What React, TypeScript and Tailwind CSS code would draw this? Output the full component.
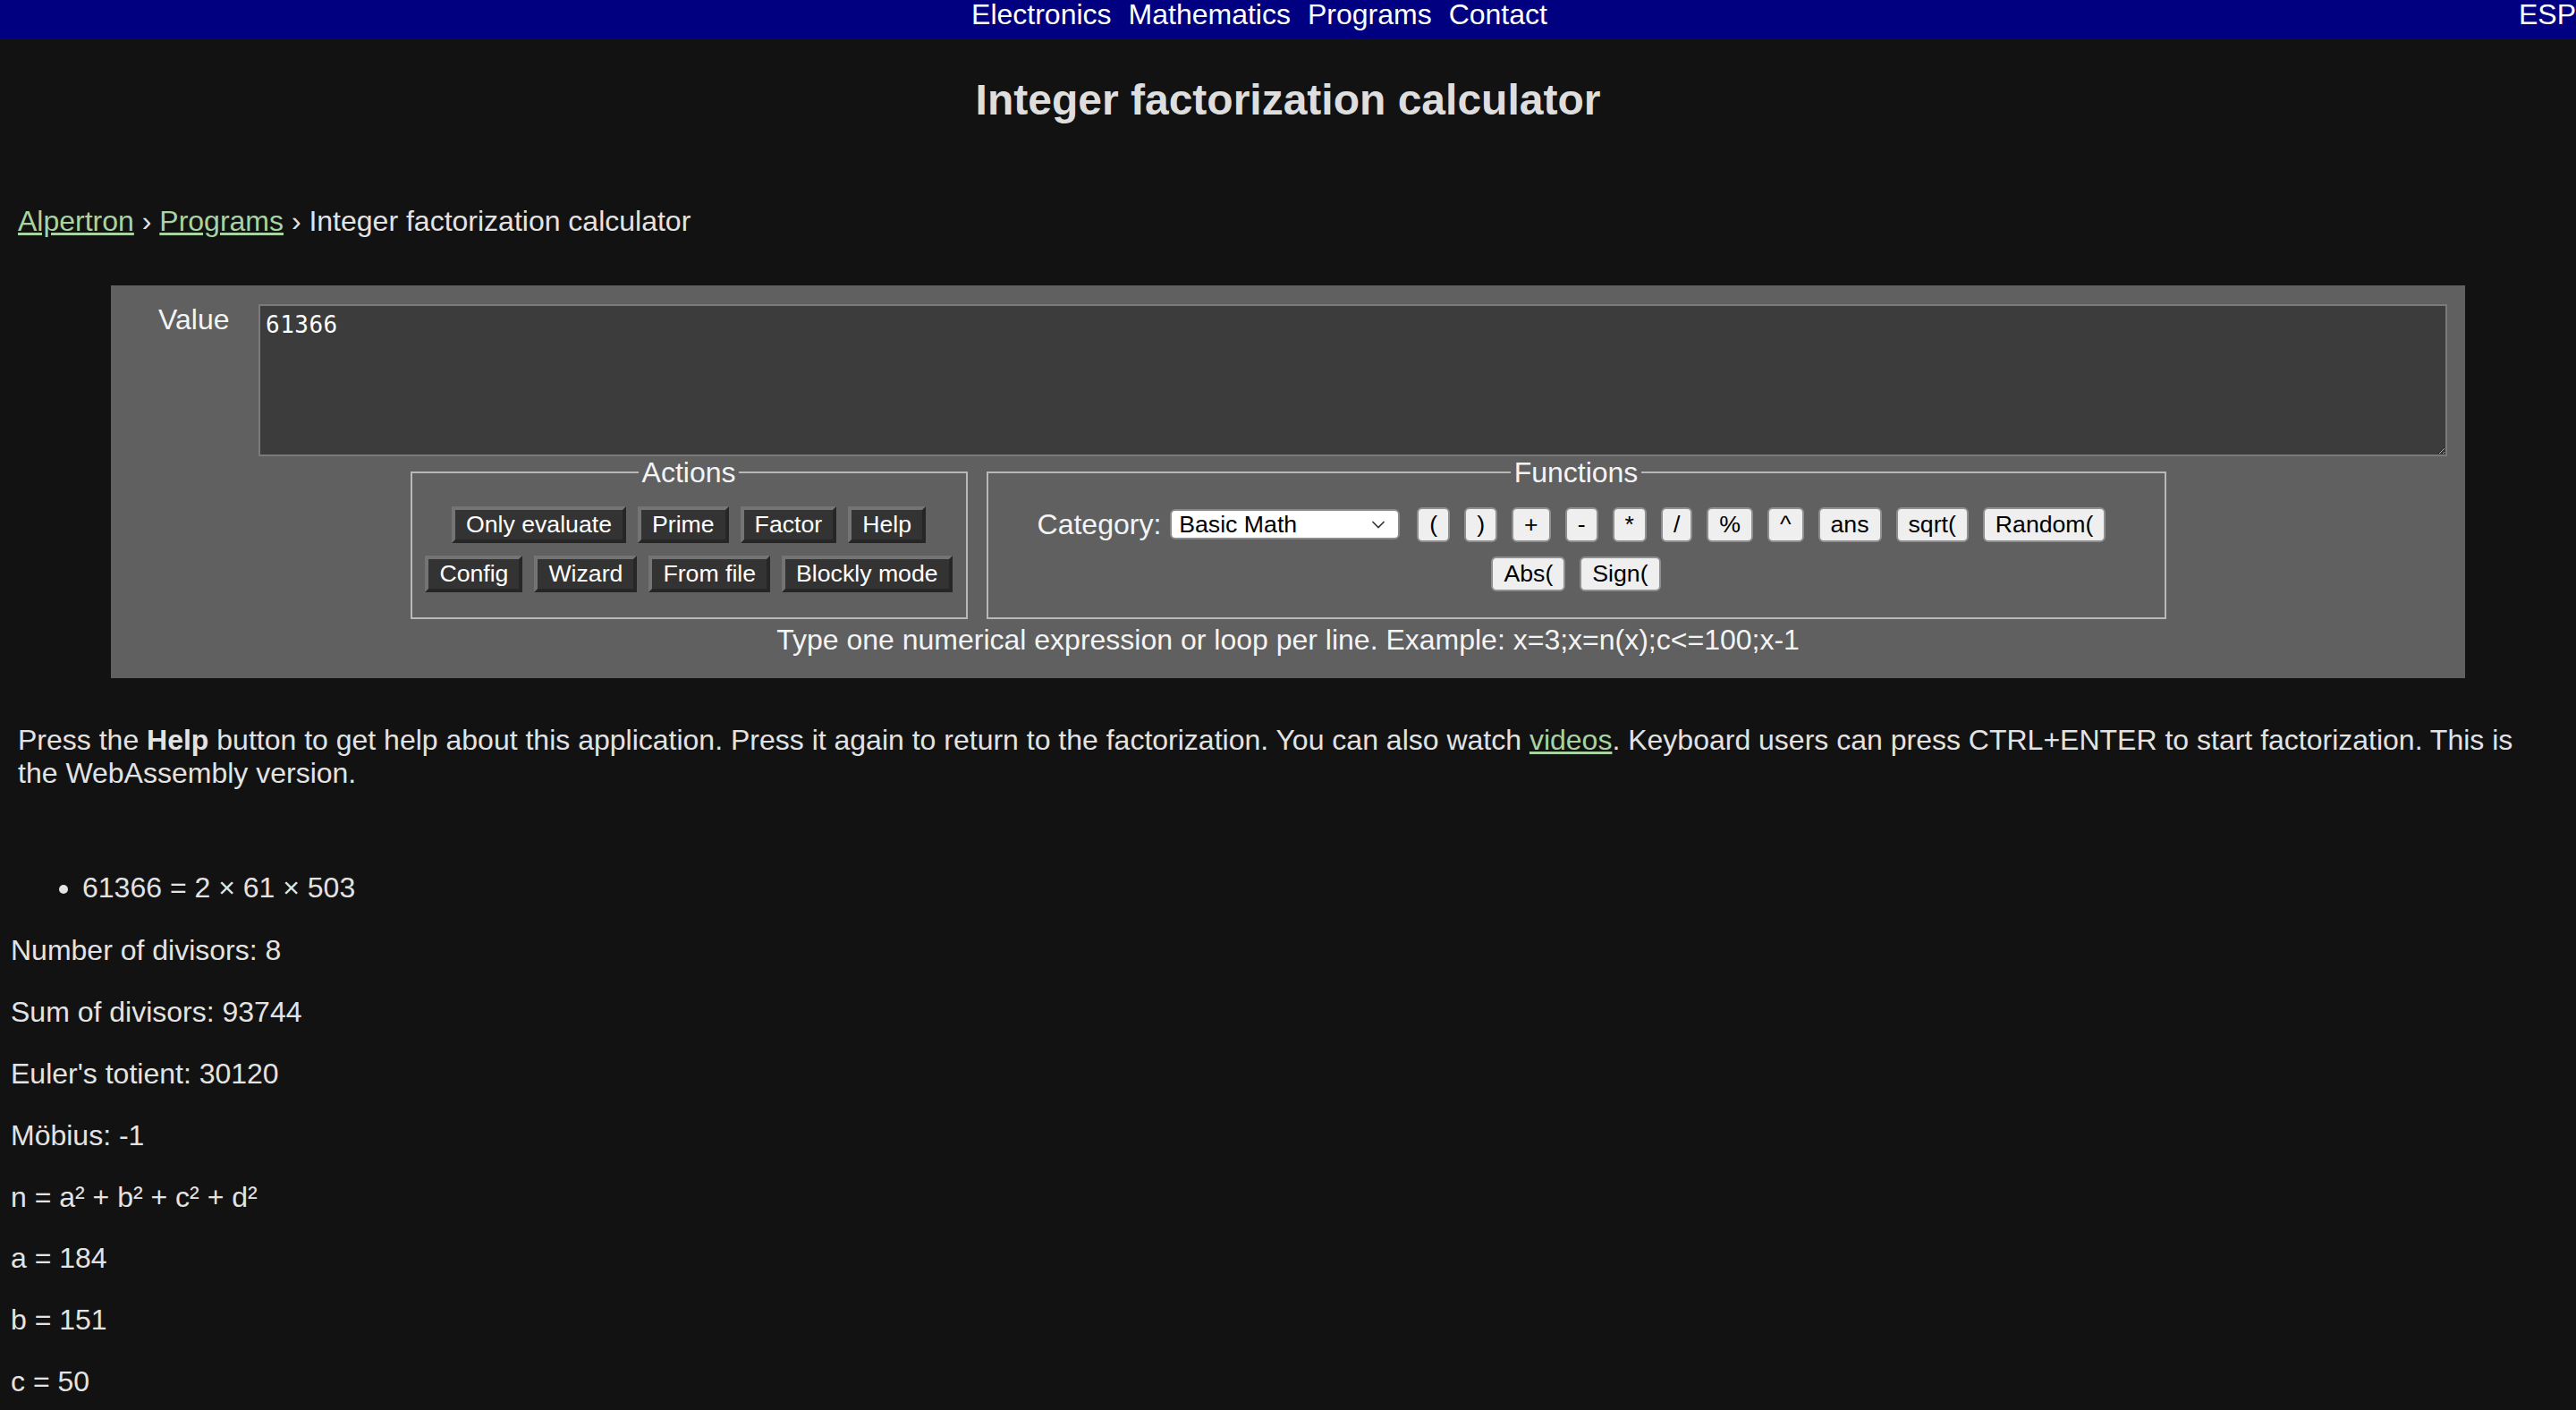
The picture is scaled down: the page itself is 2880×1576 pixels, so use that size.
import { useState } from 'react'

const actionRows = [
  ['Only evaluate', 'Prime', 'Factor', 'Help'],
  ['Config', 'Wizard', 'From file', 'Blockly mode'],
]

const basicMath = ['(', ')', '+', '-', '*', '/', '%', '^', 'ans', 'sqrt(', 'Random(']
const basicMath2 = ['Abs(', 'Sign(']

const results = [
  'Number of divisors: 8',
  'Sum of divisors: 93744',
  "Euler's totient: 30120",
  'Möbius: -1',
  'n = a² + b² + c² + d²',
  'a = 184',
  'b = 151',
  'c = 50',
  'd = 47',
]

function DarkButton({ label }: { label: string }) {
  return (
    <button className="h-[41px] px-[12px] py-[2px] text-[26.67px] leading-[29px] text-white bg-[#333333] border-4 border-t-[#747474] border-l-[#747474] border-r-[#262626] border-b-[#262626]">
      {label}
    </button>
  )
}

function LightButton({ label }: { label: string }) {
  return (
    <button className="h-[39px] px-[12px] text-[26.67px] leading-[31px] text-black bg-[#efefef] border-2 border-[#8f8f8f] rounded-[6px]">
      {label}
    </button>
  )
}

export default function App() {
  const [value, setValue] = useState('61366')

  return (
    <div className="min-h-screen bg-[#121212] text-[#e3e3e3] font-['Liberation_Sans',Arial,sans-serif] text-[32px] leading-[1.15]">
      {/* Top navigation */}
      <nav className="flex h-[43px] bg-[#000080] text-white leading-[32px]">
        <div className="flex flex-1 justify-center gap-[19px]">
          <a href="#">Electronics</a>
          <a href="#">Mathematics</a>
          <a href="#">Programs</a>
          <a href="#">Contact</a>
        </div>
        <a href="#">ESP</a>
      </nav>

      <h1 className="mt-[41px] text-center text-[48px] font-bold leading-[1.15] text-[#dedede]">
        Integer factorization calculator
      </h1>

      {/* Breadcrumb */}
      <div className="mt-[90px] pl-[20px]">
        <a href="#" className="text-[#a9d3a0] underline">Alpertron</a>
        {' › '}
        <a href="#" className="text-[#a9d3a0] underline">Programs</a>
        {' › Integer factorization calculator'}
      </div>

      {/* Input panel */}
      <div className="mx-[124px] mt-[53px] bg-[#606060] pt-[21px] pb-[24px]">
        <div className="flex items-start pl-[53px] pr-[20px]">
          <label className="w-[82px] shrink-0 -mt-[1px] leading-[37px] text-[#f4f4f4]">Value</label>
          <textarea
            value={value}
            onChange={(e) => setValue(e.target.value)}
            spellCheck={false}
            className="ml-[30px] h-[170px] flex-1 resize bg-[#3c3c3c] border-2 border-[#7a7a7a] px-[6px] pt-[6px] text-[26px] leading-[1.2] tracking-[0.5px] text-white font-['DejaVu_Sans_Mono',monospace] outline-none"
          />
        </div>

        <div className="flex justify-center gap-[21px]">
          <fieldset className="w-[623px] border-2 border-[#b8b8b8] pb-[28px]">
            <legend className="mx-auto px-[4px] leading-[37px] text-[#f4f4f4]">Actions</legend>
            <div className="flex flex-col gap-[14px] pt-[19px]">
              {actionRows.map((row, i) => (
                <div key={i} className="flex h-[41px] justify-center gap-[13px]">
                  {row.map((b) => (
                    <DarkButton key={b} label={b} />
                  ))}
                </div>
              ))}
            </div>
          </fieldset>

          <fieldset className="w-[1319px] border-2 border-[#b8b8b8] pb-[28px]">
            <legend className="mx-auto px-[4px] leading-[37px] text-[#f4f4f4]">Functions</legend>
            <div className="flex flex-col gap-[14px] pt-[19px]">
              <div className="flex h-[41px] items-center justify-center pr-[10px]">
                <span className="text-[#f4f4f4]">Category:</span>
                <div className="relative ml-[10px] mr-[19px] h-[34px] w-[257px] rounded-[6px] border-2 border-[#8a8a8a] bg-white text-black">
                  <span className="absolute left-[8px] top-0 text-[26.67px] leading-[30px]">Basic Math</span>
                  <svg className="absolute right-[14px] top-[10px]" width="16" height="10" viewBox="0 0 16 10" fill="none">
                    <path d="M1.5 2l6.5 6.5 6.5-6.5" stroke="#333" strokeWidth="1.6" />
                  </svg>
                </div>
                <div className="flex gap-[16px]">
                  {basicMath.map((b) => (
                    <LightButton key={b} label={b} />
                  ))}
                </div>
              </div>
              <div className="flex h-[41px] items-center justify-center gap-[16px]">
                {basicMath2.map((b) => (
                  <LightButton key={b} label={b} />
                ))}
              </div>
            </div>
          </fieldset>
        </div>

        <p className="mt-[5px] text-center leading-[37px] text-[#f4f4f4]">
          Type one numerical expression or loop per line. Example: x=3;x=n(x);c&lt;=100;x-1
        </p>
      </div>

      {/* Help text */}
      <p className="mt-[51px] pl-[20px] pr-[64px]">
        Press the <b>Help</b> button to get help about this application. Press it again to return to the
        factorization. You can also watch{' '}
        <a href="#" className="text-[#a9d3a0] underline">videos</a>. Keyboard users can press CTRL+ENTER to start
        factorization. This is the WebAssembly version.
      </p>

      {/* Results */}
      <div className="mt-[91px] flex flex-col gap-[32px] pl-[12px] pb-[40px]">
        <ul className="list-disc pl-[80px] mb-[2px]">
          <li>61366 = 2 × 61 × 503</li>
        </ul>
        {results.map((r) => (
          <p key={r}>{r}</p>
        ))}
      </div>
    </div>
  )
}
